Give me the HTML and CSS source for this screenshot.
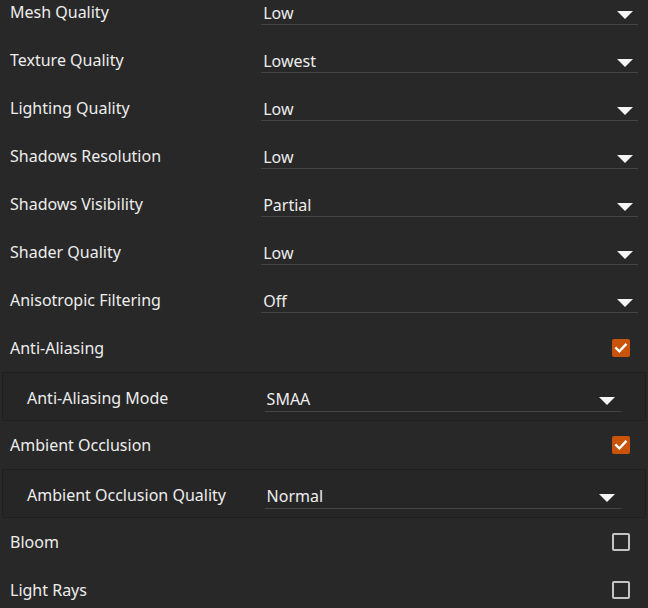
FILE: index.html
```html
<!DOCTYPE html>
<html>
<head>
<meta charset="utf-8">
<link rel="stylesheet" href="styles.css">
</head>
<body>
<div class="settings">
  <div class="row"><div class="label">Mesh Quality</div><div class="select"><span class="value">Low</span><span class="arrow"></span></div></div>
  <div class="row"><div class="label">Texture Quality</div><div class="select"><span class="value">Lowest</span><span class="arrow"></span></div></div>
  <div class="row"><div class="label">Lighting Quality</div><div class="select"><span class="value">Low</span><span class="arrow"></span></div></div>
  <div class="row"><div class="label">Shadows Resolution</div><div class="select"><span class="value">Low</span><span class="arrow"></span></div></div>
  <div class="row"><div class="label">Shadows Visibility</div><div class="select"><span class="value">Partial</span><span class="arrow"></span></div></div>
  <div class="row"><div class="label">Shader Quality</div><div class="select"><span class="value">Low</span><span class="arrow"></span></div></div>
  <div class="row"><div class="label">Anisotropic Filtering</div><div class="select"><span class="value">Off</span><span class="arrow"></span></div></div>
  <div class="row"><div class="label">Anti-Aliasing</div><div class="check checked"><svg viewBox="0 0 18 18" width="18" height="18"><polyline points="4.2,9.3 7.4,12.4 13.6,5.8" fill="none" stroke="#fff" stroke-width="2.4" stroke-linecap="square"/></svg></div></div>
  <div class="group">
    <div class="row sub"><div class="label">Anti-Aliasing Mode</div><div class="select"><span class="value">SMAA</span><span class="arrow"></span></div></div>
  </div>
  <div class="row"><div class="label">Ambient Occlusion</div><div class="check checked"><svg viewBox="0 0 18 18" width="18" height="18"><polyline points="4.2,9.3 7.4,12.4 13.6,5.8" fill="none" stroke="#fff" stroke-width="2.4" stroke-linecap="square"/></svg></div></div>
  <div class="group">
    <div class="row sub"><div class="label">Ambient Occlusion Quality</div><div class="select"><span class="value">Normal</span><span class="arrow"></span></div></div>
  </div>
  <div class="row"><div class="label">Bloom</div><div class="check"></div></div>
  <div class="row"><div class="label">Light Rays</div><div class="check"></div></div>
</div>
</body>
</html>
```

FILE: styles.css
```css
html, body {
  margin: 0;
  padding: 0;
  background: #282828;
  overflow: hidden;
}
body {
  width: 648px;
  height: 608px;
  font-family: "Noto Sans", "Open Sans", sans-serif;
  font-size: 16px;
  font-weight: 400;
  color: #ededed;
}
.settings {
  margin-top: -12px;
  display: flex;
  flex-direction: column;
}
.row {
  height: 48px;
  display: flex;
  align-items: center;
  padding: 0 10px;
}
.label {
  flex: 0 0 40%;
  white-space: nowrap;
  line-height: 22px;
  margin-top: -1px;
}
.select {
  flex: 1;
  height: 25px;
  border-bottom: 1px solid #454545;
  display: flex;
  align-items: center;
  justify-content: space-between;
  padding: 0 5px 0 2px;
}
.value {
  line-height: 22px;
  margin-top: 2px;
}
.arrow {
  width: 0;
  height: 0;
  border-left: 8px solid transparent;
  border-right: 8px solid transparent;
  border-top: 8px solid #f4f4f4;
  margin-top: 6px;
}
.check {
  margin-left: auto;
  margin-right: 8px;
  width: 18px;
  height: 18px;
  box-sizing: border-box;
  border: 2px solid #c4c4c4;
  border-radius: 2px;
}
.check.checked {
  border: none;
  background: #c85309;
}
.check svg {
  display: block;
}
.group {
  margin: 0 2px 0 2px;
  border: 1px solid #1f1f1f;
  background: #262626;
}
.sub {
  height: 47px;
  padding: 0 24px;
}
.sub .label {
  margin-top: 2px;
}
.sub .select {
  margin-top: 4px;
  padding-right: 6px;
}
```
